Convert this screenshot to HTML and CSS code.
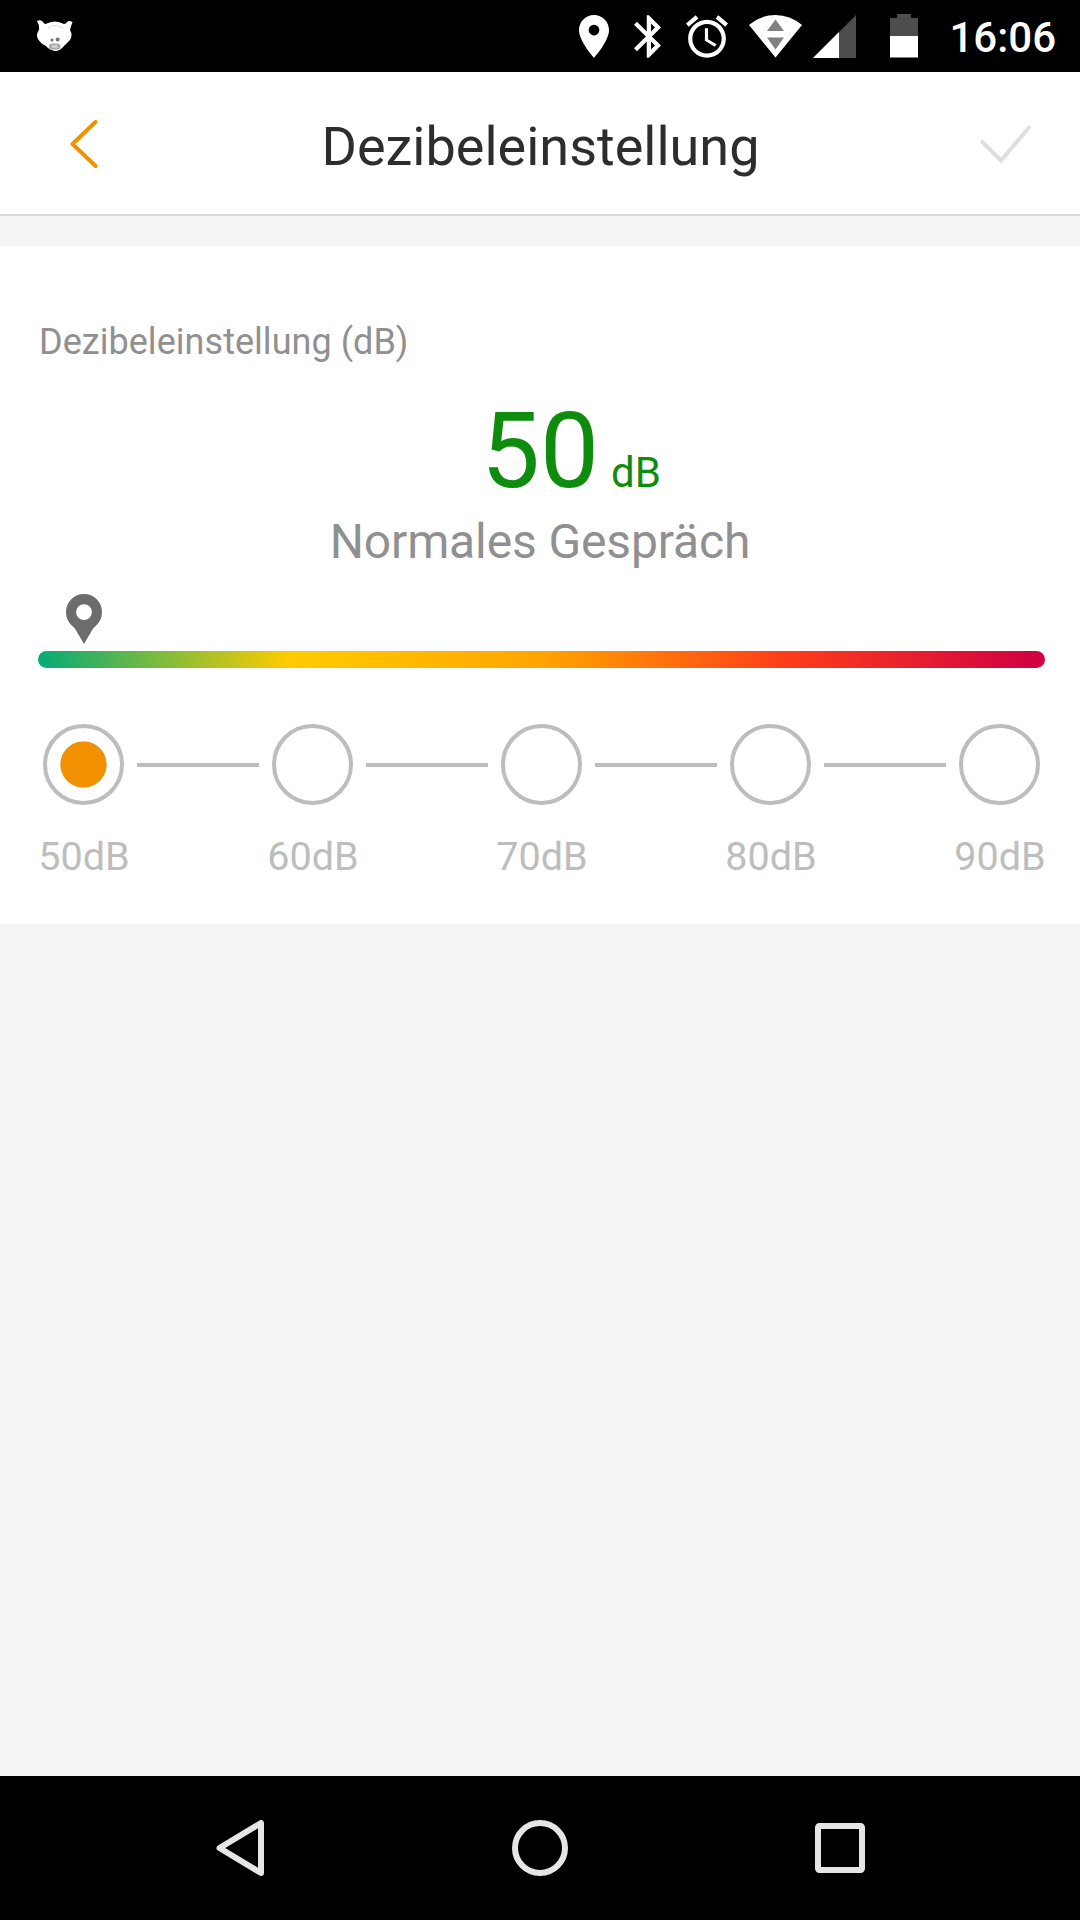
FILE: index.html
```html
<!DOCTYPE html>
<html lang="de">
<head>
<meta charset="utf-8">
<title>Dezibeleinstellung</title>
<link rel="stylesheet" href="styles.css">
</head>
<body>
<div class="screen">
  <div class="status-bar">
    <svg class="notification" width="38" height="34" viewBox="0 0 38 34">
      <path fill="#fff" d="M1 2Q5 0 7 3Q8 5 9.500 5Q19 0 28 5Q30 5 31 3Q33 1 36.500 3Q35 7 34 11Q37 16 34 21Q30 25 28 27Q24 32 19 32Q13 31 10 27Q5 25 2 20Q-.500 15 3 11Q3.500 6 1 2Z"/>
      <path d="M12 9Q18 4 26 9" fill="none" stroke="#ddd" stroke-width="1.200"/>
      <circle cx="16" cy="21" r="1.600" fill="#777"/><circle cx="21.700" cy="20.500" r="2" fill="#777"/>
      <rect x="13" y="24.500" width="11.500" height="6" rx="3" fill="#aaa"/>
      <rect x="15.500" y="26" width="6.500" height="3" rx="1.500" fill="#ccc"/>
    </svg>
    <svg width="30" height="43" viewBox="5 2 14 20" fill="#fff"><path d="M12 2C8.130 2 5 5.130 5 9c0 5.250 7 13 7 13s7-7.750 7-13c0-3.870-3.130-7-7-7zm0 9.500a2.500 2.500 0 1 1 0-5 2.500 2.500 0 0 1 0 5z"/></svg>
    <svg class="bluetooth" width="27" height="43" viewBox="5 2 12.710 20" fill="#fff"><path d="M17.710 7.710L12 2h-1v7.590L6.410 5 5 6.410 10.590 12 5 17.590 6.410 19 11 14.410V22h1l5.710-5.710-4.300-4.290 4.300-4.290zM13 5.830l1.880 1.880L13 9.590V5.830zm1.880 10.460L13 18.170v-3.760l1.880 1.880z"/></svg>
    <svg class="alarm" width="42" height="43" viewBox="2 1.860 20 20.140" fill="#fff"><path d="M22 5.720l-4.600-3.860-1.290 1.530 4.600 3.860L22 5.720zM7.880 3.390L6.600 1.860 2 5.710l1.290 1.530 4.590-3.850zM12.500 8H11v6l4.750 2.850.750-1.230-4-2.370V8zM12 4c-4.970 0-9 4.030-9 9s4.020 9 9 9c4.970 0 9-4.030 9-9s-4.030-9-9-9zm0 16c-3.870 0-7-3.130-7-7s3.130-7 7-7 7 3.130 7 7-3.130 7-7 7z"/></svg>
    <svg class="wifi" width="53" height="43" viewBox="0 0 53 43"><path fill="#fff" d="M0 10Q12 0 26.500 0T53 10L26.500 42.500z"/><path fill="#808080" d="M18 16h17L26.500 4.500zM18 22.500h17L26.500 34.500z"/></svg>
    <svg class="signal" width="43" height="43" viewBox="0 0 43 43"><path fill="#4d4d4d" d="M43 0v43H0z"/><path fill="#fff" d="M26 17v26H0z"/></svg>
    <svg class="battery" width="28" height="44" viewBox="0 0 28 44"><path fill="#4d4d4d" d="M7 0h14v4h7v18H0V4h7z"/><path fill="#fff" d="M0 22h28v21.500H0z"/></svg>
    <span class="clock">16:06</span>
  </div>

  <header class="app-bar">
    <svg width="28" height="48" viewBox="0 0 28 48" fill="none" stroke="#f29100" stroke-width="4" stroke-linecap="round" stroke-linejoin="round"><path d="M25.500 2L2.500 24l23 22"/></svg>
    <h1 class="title">Dezibeleinstellung</h1>
    <svg width="51" height="38" viewBox="0 0 51 38" fill="none" stroke="#dfdfdf" stroke-width="4" stroke-linecap="round"><path d="M2.500 17L21 35.500 49 2.500"/></svg>
  </header>

  <main class="card">
    <div class="card-label">Dezibeleinstellung (dB)</div>
    <div class="reading"><span class="value">50</span><span class="unit">dB</span></div>
    <div class="description">Normales Gespräch</div>
    <svg class="pin" width="36" height="50" viewBox="0 0 36 50" fill="#6c6c6c"><path fill-rule="evenodd" d="M18 0a18 18 0 0 1 18 18c0 7-3.500 12-8 15.500Q27 34.500 26.500 35.500L18 50 9.500 35.500Q9 34.500 8 33.500C3.500 30 0 25 0 18A18 18 0 0 1 18 0zM18 10.300a7.900 7.900 0 1 0 0 15.800 7.900 7.900 0 0 0 0-15.800z"/></svg>
    <div class="scale"></div>
    <div class="steps">
      <span class="step selected"></span><span class="line"></span><span class="step"></span><span class="line"></span><span class="step"></span><span class="line"></span><span class="step"></span><span class="line"></span><span class="step"></span>
    </div>
    <div class="step-labels"><span>50dB</span><span>60dB</span><span>70dB</span><span>80dB</span><span>90dB</span></div>
  </main>

  <nav class="nav-bar">
    <svg width="48" height="56" viewBox="0 0 48 56" fill="none" stroke="#e6e6e6" stroke-width="6" stroke-linejoin="round"><path d="M45 3v50L3.500 28z"/></svg>
    <svg width="56" height="56" viewBox="0 0 56 56" fill="none" stroke="#e6e6e6" stroke-width="6"><circle cx="28" cy="28" r="25"/></svg>
    <svg width="50" height="50" viewBox="0 0 50 50" fill="none" stroke="#e6e6e6" stroke-width="6"><rect x="3" y="3" width="44" height="44" rx="1.500"/></svg>
  </nav>
</div>
</body>
</html>
```
FILE: styles.css
```css
* { box-sizing: border-box; }

body {
  margin: 0;
  font-family: Roboto, sans-serif;
}

svg { display: block; flex: none; }

.screen {
  width: 1080px;
  height: 1920px;
  display: flex;
  flex-direction: column;
  background: #f5f5f5;
}

.status-bar {
  height: 72px;
  flex: none;
  display: flex;
  align-items: center;
  padding: 0 24px 0 36px;
  background: #000;
}

.notification { margin-right: auto; }
.bluetooth { margin-left: 25px; }
.alarm { margin-left: 25px; }
.wifi { margin-left: 21px; }
.signal { margin-left: 11px; }
.battery { margin-left: 34px; }

.clock {
  width: 108px;
  margin-left: 30px;
  text-align: right;
  color: #fff;
  font-size: 42px;
  font-weight: 500;
  line-height: 72px;
  padding-top: 4px;
}

.app-bar {
  height: 144px;
  flex: none;
  display: flex;
  align-items: center;
  justify-content: space-between;
  padding: 2px 49px 0 70px;
  border-bottom: 2px solid #d9d9d9;
  background: #fff;
}

.title {
  margin: 0;
  padding: 6px 0 0 3px;
  color: #2d2d2d;
  font-size: 54px;
  font-weight: 400;
  line-height: 64px;
}

.card {
  height: 678px;
  flex: none;
  margin-top: 30px;
  padding: 74px 34px 0 38px;
  background: #fff;
}

.card-label {
  padding-left: 1px;
  color: #909090;
  font-size: 36px;
  line-height: 44px;
  letter-spacing: 0.04px;
}

.reading {
  display: flex;
  justify-content: center;
  align-items: baseline;
  height: 126px;
  margin-top: 24px;
  padding-left: 58px;
  color: #0e8c0e;
  line-height: 128px;
}

.value { font-size: 105px; }
.unit { margin-left: 12px; font-size: 42px; }

.description {
  padding-right: 4px;
  text-align: center;
  color: #909090;
  font-size: 48px;
  line-height: 56px;
  letter-spacing: -0.12px;
}

.pin { margin: 24px 0 7px 28px; }

.scale {
  height: 17px;
  margin-right: 1px;
  border-radius: 9px;
  background: linear-gradient(90deg, #0aab75 0, #0aab75 5px, #ffcc00 25.200%, #ffa500 50%, #ff3c19 74.500%, #d30043 99%);
}

.steps {
  display: flex;
  align-items: center;
  gap: 13px;
  margin: 56px 6px 0 5px;
}

.step {
  width: 81px;
  height: 81px;
  flex: none;
  border: 4px solid #bdbdbd;
  border-radius: 50%;
}

.selected { background: radial-gradient(circle, #f29100 22.700px, transparent 23.500px); }

.line {
  flex: 1;
  height: 4px;
  background: #bdbdbd;
}

.step-labels {
  display: flex;
  justify-content: space-between;
  margin-top: 28px;
  color: #bdbdbd;
  font-size: 39.5px;
  line-height: 48px;
}

.step-labels span {
  width: 92px;
  text-align: center;
}

.nav-bar {
  height: 144px;
  flex: none;
  display: grid;
  grid-template-columns: repeat(3, 300px);
  place-items: center;
  justify-content: center;
  margin-top: auto;
  background: #000;
}
```
